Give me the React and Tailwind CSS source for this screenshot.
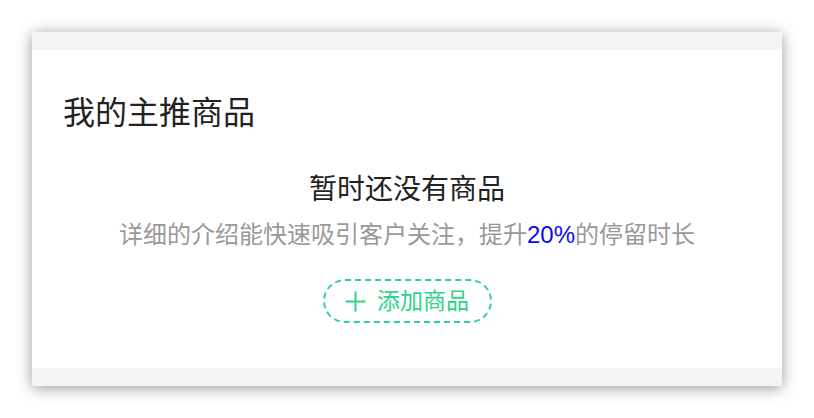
import React from 'react';

const PlusIcon = () => (
  <svg width="21" height="21" viewBox="0 0 21 21" fill="none">
    <path d="M10.5 0.5v20M0.5 10.5h20" stroke="currentColor" strokeWidth="2" />
  </svg>
);

const App = () => {
  return (
    <div
      className="w-[814px] h-[418px] bg-white p-8"
      style={{ fontFamily: '"Liberation Sans", "Noto Sans CJK SC", sans-serif' }}
    >
      <div className="bg-white shadow-[0_2px_14px_rgba(0,0,0,0.4)]">
        <div className="h-[18px] bg-[#f4f4f4]" />

        <div className="h-[318px] px-[31px]">
          <h2 className="pt-[44px] text-[32px] leading-[38px] text-[#222]">我的主推商品</h2>

          {/* Empty state */}
          <div className="flex flex-col items-center">
            <p className="mt-[41px] text-[28px] leading-[34px] text-[#222]">暂时还没有商品</p>
            <p className="mt-[13px] text-[24px] leading-[30px] text-[#999]">
              详细的介绍能快速吸引客户关注，提升<span className="text-[#0a0af0]">20%</span>的停留时长
            </p>
            <button className="mt-[29px] h-[44px] w-[169px] flex items-center justify-center gap-[11px] rounded-full border-2 border-dashed border-[#2fd48a] text-[#2fd48a]">
              <PlusIcon />
              <span className="text-[23px] leading-[28px]">添加商品</span>
            </button>
          </div>
        </div>

        <div className="h-[18px] bg-[#f4f4f4]" />
      </div>
    </div>
  );
};

export default App;
